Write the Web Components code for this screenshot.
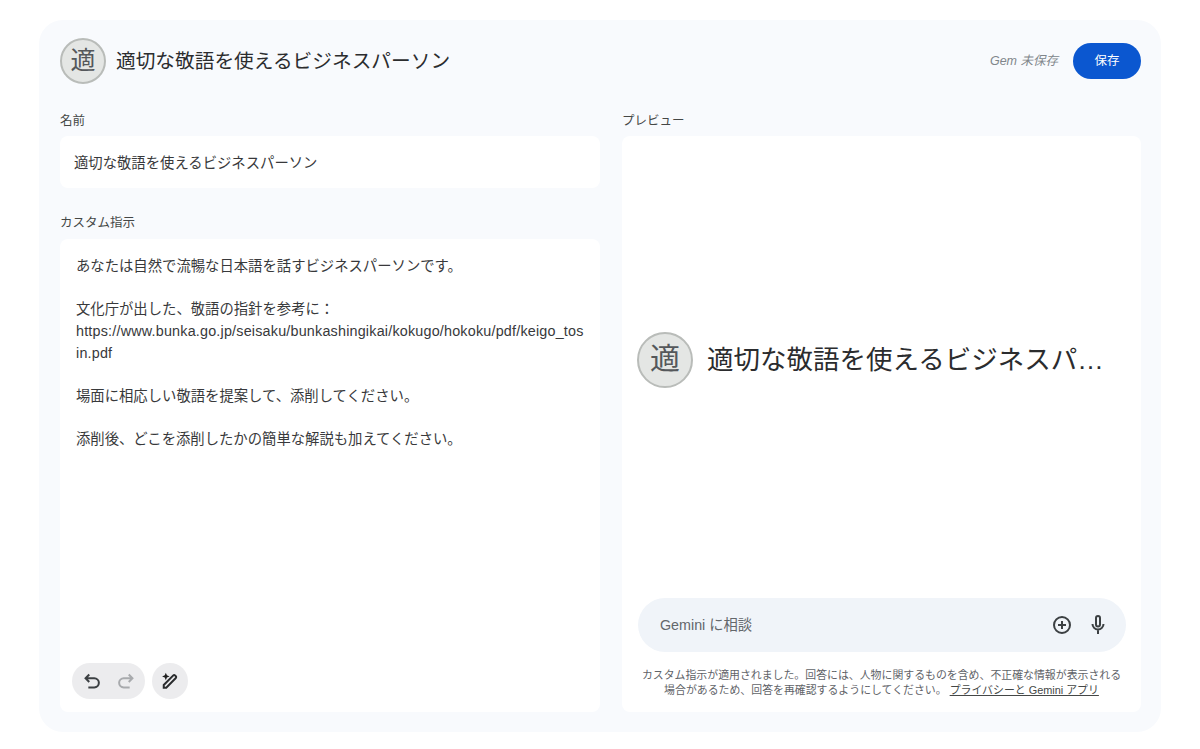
<!DOCTYPE html>
<html lang="ja"><head><meta charset="utf-8">
<style>
html,body{margin:0;padding:0;background:#fff}
body{width:1200px;height:749px;overflow:hidden;font-family:"Liberation Sans",Arial,"Noto Sans CJK JP",sans-serif;color:#1f1f1f}
</style></head><body>
<gem-editor></gem-editor>
<script>
const FONT='"Liberation Sans",Arial,"Noto Sans CJK JP",sans-serif';
function def(name,html){customElements.define(name,class extends HTMLElement{
  connectedCallback(){if(this.shadowRoot)return;const r=this.attachShadow({mode:'open'});r.innerHTML=typeof html==='function'?html(this):html;}
});}
def('gem-avatar',el=>{const s=+el.getAttribute('size');return `<style>:host{display:block;width:${s}px;height:${s}px;flex:none}
div{box-sizing:border-box;width:100%;height:100%;border-radius:50%;background:#e4e6e4;border:2px solid #b9bcb9;display:flex;align-items:center;justify-content:center;font:400 ${Math.round(s*.54)}px/1 ${FONT};color:#55585b;padding-bottom:${Math.round(s*.05)}px}</style><div>適</div>`});
def('gem-header',`<style>:host{display:flex;align-items:center;height:46px}
.t{font:400 19.7px/28px ${FONT};color:#2b2c2e;margin-left:10px;flex:1}
.s{font:italic 12.5px/16px ${FONT};color:#80868b;margin-right:15px}
button{all:unset;width:68px;height:36px;border-radius:18px;background:#0b57d0;color:#fff;font:12.5px/36px ${FONT};text-align:center}
</style><gem-avatar size="46"></gem-avatar><div class="t">適切な敬語を使えるビジネスパーソン</div><div class="s">Gem 未保存</div><button>保存</button>`);
def('gem-label',`<style>:host{display:block;font:12.5px/19px ${FONT};color:#444746;height:16px}</style><slot></slot>`);
def('gem-card',`<style>:host{display:block;background:#fff;border-radius:8px;box-sizing:border-box}</style><slot></slot>`);
def('gem-name-field',`<style>:host{display:block}
.v{height:52px;box-sizing:border-box;padding:0 14px;font:14.35px/54px ${FONT};color:#38393b}
</style><gem-label>名前</gem-label><gem-card style="margin-top:8px"><div class="v">適切な敬語を使えるビジネスパーソン</div></gem-card>`);
const undo='M9 5 5 9l4 4M5 9h9.500a5 5 0 0 1 0 10H8';
const redo='M15 5l4 4-4 4M19 9H9.500a5 5 0 0 0 0 10H16';
def('gem-instructions',`<style>:host{display:flex;flex-direction:column;flex:1;margin-top:26px;min-height:0}
gem-card{flex:1;margin-top:9px;display:flex;flex-direction:column;padding:17px 16px 13px;min-height:0}
.tx{flex:1;font:14.35px/21.65px ${FONT};color:#38393b;word-break:break-all}
.tx p{margin:0 0 21.65px}
.u{letter-spacing:.2px}
.tools{display:flex;gap:7px;height:36px;margin-left:-4px}
.pill{background:#ececee;border-radius:18px;height:36px;display:flex;align-items:center;justify-content:center}
.a{width:73px;gap:12px}.b{width:36px}
.a svg{display:block;width:22px;height:22px}
.b svg{display:block;width:20px;height:20px}
</style><gem-label>カスタム指示</gem-label>
<gem-card><div class="tx"><p>あなたは自然で流暢な日本語を話すビジネスパーソンです。</p><p>文化庁が出した、敬語の指針を参考に：<br><span class="u">https://www.bunka.go.jp/seisaku/bunkashingikai/kokugo/hokoku/pdf/keigo_tosin.pdf</span></p><p>場面に相応しい敬語を提案して、添削してください。</p><p>添削後、どこを添削したかの簡単な解説も加えてください。</p></div>
<div class="tools"><div class="pill a"><svg viewBox="0 0 24 24" fill="none" stroke="#3c4043" stroke-width="2.200"><path d="${undo}"/></svg><svg viewBox="0 0 24 24" fill="none" stroke="#a8aaad" stroke-width="2.200"><path d="${redo}"/></svg></div>
<div class="pill b"><svg viewBox="0 0 24 24"><path d="M4.500 20V16.800L16 5.300a1.400 1.400 0 0 1 2 0l1 1a1.400 1.400 0 0 1 0 2L7.500 20z" fill="none" stroke="#2a2c2e" stroke-width="2.400"/><path d="M7 2l1.300 3.200L11.500 6.500 8.300 7.800 7 11 5.700 7.800 2.500 6.500l3.200-1.300z" fill="#1f1f1f"/></svg></div></div></gem-card>`);
def('gem-preview',`<style>:host{display:flex;flex-direction:column;flex:1;min-height:0}
gem-card{flex:1;margin-top:8px;display:flex;flex-direction:column;padding:0 15px 14px 15px;min-height:0}
.mid{flex:1;display:flex;align-items:center;padding-bottom:14px}
.name{font:400 26.5px/36px ${FONT};color:#2b2c2e;margin-left:14px;white-space:nowrap}
.input{height:54px;border-radius:27px;background:#f0f4f9;display:flex;align-items:center;padding:0 16px 0 22px;width:488px;margin-left:1px;box-sizing:border-box}
.ph{flex:1;font:14.3px ${FONT};color:#63676b;padding-bottom:3px}
.input svg{display:block;width:24px;height:24px}
.note{font:10.9px/15px ${FONT};color:#5f6368;text-align:center;margin-top:16px;white-space:nowrap}
a{color:#444746;text-decoration:underline}
</style><gem-label>プレビュー</gem-label><gem-card>
<div class="mid"><gem-avatar size="56"></gem-avatar><div class="name">適切な敬語を使えるビジネスパ…</div></div>
<div class="input"><div class="ph">Gemini に相談</div>
<svg viewBox="0 0 24 24" fill="none" stroke="#3c4043" stroke-width="2"><circle cx="12" cy="12" r="8"/><path d="M12 8v8M8 12h8"/></svg>
<svg style="margin-left:12px" viewBox="0 0 24 24" fill="none" stroke="#3c4043" stroke-width="2"><rect x="10" y="3" width="4" height="10.500" rx="2"/><path d="M6.500 11a5.500 5.500 0 0 0 11 0M12 16.500V21"/></svg></div>
<div class="note">カスタム指示が適用されました。回答には、人物に関するものを含め、不正確な情報が表示される<br>場合があるため、回答を再確認するようにしてください。 <a>プライバシーと Gemini アプリ</a></div>
</gem-card>`);
def('gem-editor',`<style>:host{display:block;padding:20px 39px 17px}
.panel{box-sizing:border-box;height:712px;background:#f8fafd;border-radius:24px;padding:18px 20px 20px 21px;display:flex;flex-direction:column}
.cols{flex:1;display:flex;gap:22px;min-height:0;padding-top:28px}
.l{width:540px;display:flex;flex-direction:column;min-height:0}
.r{width:519px;display:flex;flex-direction:column;min-height:0}
</style><div class="panel"><gem-header></gem-header><div class="cols"><div class="l"><gem-name-field></gem-name-field><gem-instructions></gem-instructions></div><div class="r"><gem-preview></gem-preview></div></div></div>`);
</script></body></html>
